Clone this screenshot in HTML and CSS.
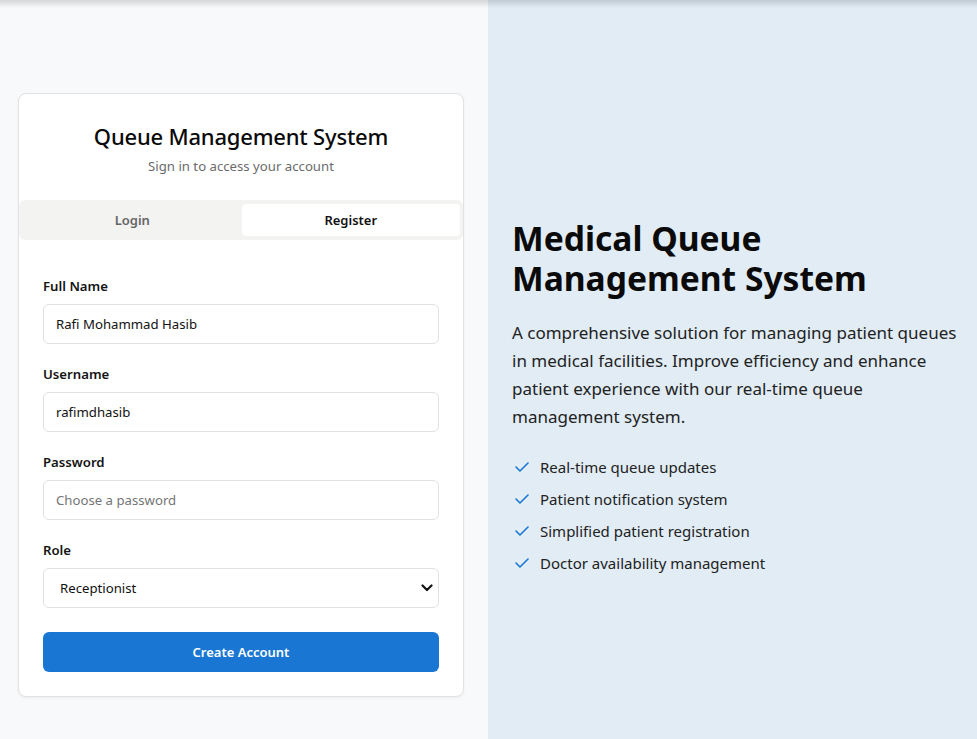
FILE: index.html
```html
<!DOCTYPE html>
<html lang="en">
<head>
<meta charset="utf-8">
<title>Queue Management System</title>
<link rel="stylesheet" href="styles.css">
</head>
<body>
<div class="page">
  <section class="left">
    <div class="card">
      <header class="card-head">
        <h1 class="title">Queue Management System</h1>
        <p class="subtitle">Sign in to access your account</p>
      </header>
      <div class="tabs">
        <button class="tab">Login</button>
        <button class="tab active">Register</button>
      </div>
      <form class="form">
        <div class="group">
          <label class="label">Full Name</label>
          <input class="input" type="text" value="Rafi Mohammad Hasib">
        </div>
        <div class="group">
          <label class="label">Username</label>
          <input class="input" type="text" value="rafimdhasib">
        </div>
        <div class="group">
          <label class="label">Password</label>
          <input class="input" type="password" placeholder="Choose a password">
        </div>
        <div class="group">
          <label class="label">Role</label>
          <div class="select-wrap">
            <select class="input select">
              <option>Receptionist</option>
              <option>Doctor</option>
              <option>Admin</option>
            </select>
            <svg class="chev" width="12" height="8" viewBox="0 0 12 8"><path d="M1.5 1.5 6 6l4.5-4.5" fill="none" stroke="#111" stroke-width="2.2" stroke-linecap="round" stroke-linejoin="round"/></svg>
          </div>
        </div>
        <button type="button" class="submit">Create Account</button>
      </form>
    </div>
  </section>
  <section class="right">
    <div class="info">
      <h2 class="headline">Medical Queue<br>Management System</h2>
      <p class="lead">A comprehensive solution for managing patient queues in medical facilities. Improve efficiency and enhance patient experience with our real-time queue management system.</p>
      <ul class="features">
        <li><svg class="check" width="14" height="10" viewBox="0 0 14 10"><path d="M1 5l4 4 8-8" fill="none" stroke="#1976d2" stroke-width="1.6" stroke-linecap="round" stroke-linejoin="round"/></svg>Real-time queue updates</li>
        <li><svg class="check" width="14" height="10" viewBox="0 0 14 10"><path d="M1 5l4 4 8-8" fill="none" stroke="#1976d2" stroke-width="1.6" stroke-linecap="round" stroke-linejoin="round"/></svg>Patient notification system</li>
        <li><svg class="check" width="14" height="10" viewBox="0 0 14 10"><path d="M1 5l4 4 8-8" fill="none" stroke="#1976d2" stroke-width="1.6" stroke-linecap="round" stroke-linejoin="round"/></svg>Simplified patient registration</li>
        <li><svg class="check" width="14" height="10" viewBox="0 0 14 10"><path d="M1 5l4 4 8-8" fill="none" stroke="#1976d2" stroke-width="1.6" stroke-linecap="round" stroke-linejoin="round"/></svg>Doctor availability management</li>
      </ul>
    </div>
  </section>
</div>
</body>
</html>
```
FILE: styles.css
```css
* { box-sizing: border-box; }
html, body { margin: 0; padding: 0; height: 100%; overflow: hidden; }
body {
  font-family: "Noto Sans", "Open Sans", sans-serif;
  color: #111;
  background: #f8f9fb;
}
.page {
  position: relative;
  display: grid;
  grid-template-columns: 488px 1fr;
  height: 739px;
}
.page::before {
  content: "";
  position: absolute;
  left: 0; right: 0; top: 0;
  height: 8px;
  background: linear-gradient(rgba(0,0,0,0.14), rgba(0,0,0,0));
  pointer-events: none;
}
.left {
  background: #f8f9fb;
  padding: 93px 0 0 18px;
}
.card {
  width: 446px;
  background: #fff;
  border: 1px solid #e2e2e2;
  border-radius: 8px;
  box-shadow: 0 1px 3px rgba(0,0,0,0.05);
  overflow: hidden;
}
.card-head {
  text-align: center;
  padding: 24px 24px 24px;
}
.title {
  margin: 0;
  font-size: 22px;
  font-weight: 500;
  letter-spacing: -0.2px;
  line-height: 36px;
  color: #0a0a0a;
}
.subtitle {
  margin: 2px 0 0;
  font-size: 13.2px;
  line-height: 20px;
  color: #6b6b6b;
}
.tabs {
  display: grid;
  grid-template-columns: 1fr 1fr;
  background: #f3f3f2;
  padding: 4px 3px 4px 4px;
  border-radius: 6px;
}
.tab {
  font: inherit;
  font-size: 13px;
  font-weight: 600;
  height: 32px;
  border: 0;
  background: transparent;
  color: #666;
  border-radius: 4px;
}
.tab.active {
  background: #fff;
  color: #111;
}
.form {
  padding: 36px 24px 24px;
}
.group {
  margin-bottom: 20px;
}
.label {
  display: block;
  font-size: 13.2px;
  font-weight: 600;
  line-height: 20px;
  margin-bottom: 8px;
  color: #141414;
}
.input {
  display: block;
  width: 100%;
  height: 40px;
  padding: 0 12px;
  font: inherit;
  font-size: 13.2px;
  color: #111;
  background: #fff;
  border: 1px solid #e1e1e1;
  border-radius: 6px;
  outline: none;
}
.input::placeholder { color: #757575; }
.select-wrap { position: relative; }
.select {
  appearance: none;
  -webkit-appearance: none;
  padding-left: 16px;
}
.chev {
  position: absolute;
  right: 6px;
  top: 16px;
}
.group:last-of-type { margin-bottom: 24px; }
.submit {
  display: block;
  width: 100%;
  height: 40px;
  border: 0;
  border-radius: 6px;
  background: #1976d2;
  color: #fff;
  font: inherit;
  font-size: 13px;
  font-weight: 600;
}
.right {
  background: #e1ecf5;
  padding: 218px 8px 0 24px;
}
.headline {
  margin: 0;
  font-size: 33.6px;
  font-weight: 700;
  line-height: 40px;
  color: #0a0a0a;
}
.lead {
  margin: 21px 0 0;
  font-size: 17px;
  line-height: 28px;
  color: #222;
}
.features {
  list-style: none;
  margin: 24px 0 0;
  padding: 0;
}
.features li {
  display: flex;
  align-items: center;
  font-size: 15px;
  line-height: 24px;
  margin-bottom: 8px;
  color: #222;
}
.check {
  margin: 0 11px 0 3px;
  flex: none;
}
```
